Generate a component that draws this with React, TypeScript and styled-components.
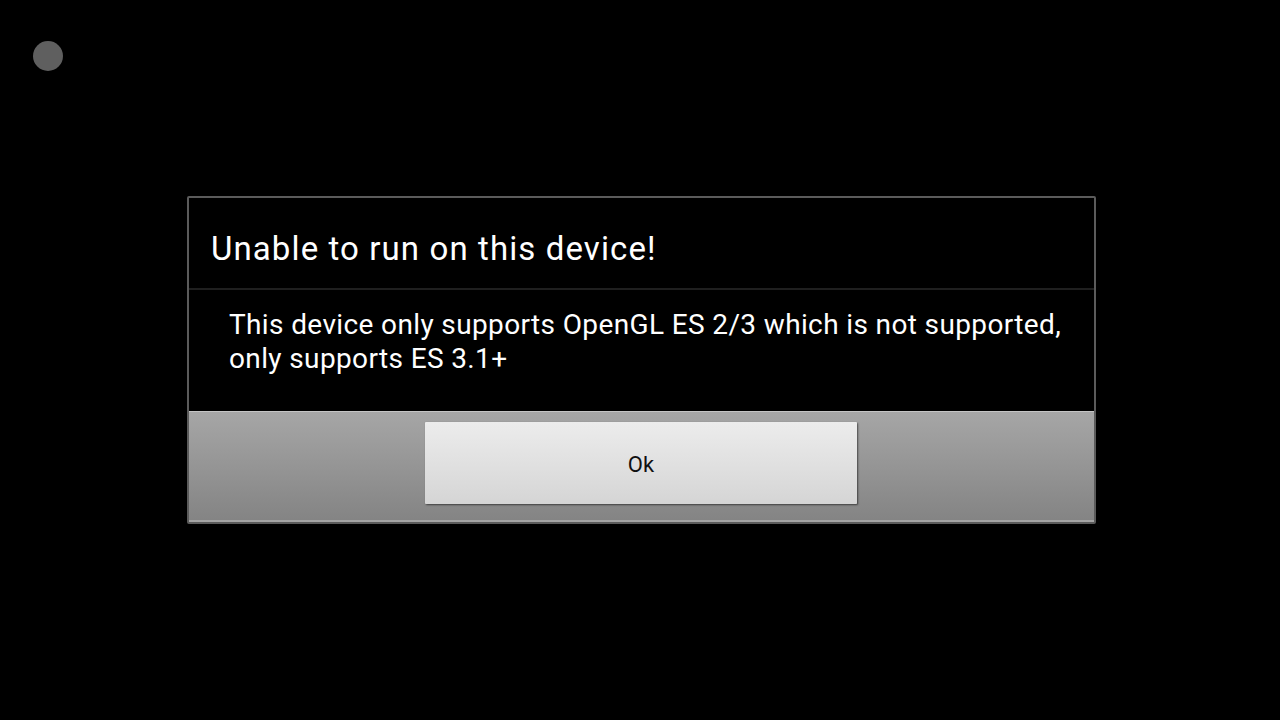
import styled, { createGlobalStyle } from "styled-components";

const Global = createGlobalStyle`
 html, body { margin: 0; padding: 0; background: #000; }
 body { font-family: Roboto, "Noto Sans", sans-serif; }
`;

const Screen = styled.div`
 width: 1280px;
 height: 720px;
 background: #000;
 position: relative;
 display: flex;
 align-items: flex-start;
 justify-content: center;
 padding-top: 196px;
 padding-left: 3px;
 box-sizing: border-box;
`;

const Dot = styled.div`
 position: absolute;
 left: 33px;
 top: 41px;
 width: 30px;
 height: 30px;
 border-radius: 50%;
 background: #5f5f5f;
`;

const Dialog = styled.div`
 width: 905px;
 border: 2px solid #5b5b5b;
 border-radius: 2px;
 background: #000;
 display: flex;
 flex-direction: column;
`;

const Title = styled.div`
 height: 92px;
 padding-left: 22px;
 padding-top: 10px;
 display: flex;
 align-items: center;
 color: #fff;
 font-size: 33px;
 letter-spacing: 1.1px;
 border-bottom: 2px solid #1f1f1f;
 box-sizing: border-box;
`;

const Message = styled.div`
 padding: 18px 20px 0 40px;
 height: 121px;
 box-sizing: border-box;
 color: #fff;
 font-size: 28px;
 letter-spacing: 0.37px;
 line-height: 34px;
 white-space: nowrap;
`;

const ButtonBar = styled.div`
 height: 111px;
 box-sizing: border-box;
 border-top: 1px solid #c4c4c4;
 border-bottom: 2px solid #a4a4a4;
 background: linear-gradient(to bottom, #a6a6a6, #848484);
 display: flex;
 justify-content: center;
 padding-top: 10px;
`;

const Button = styled.button`
 width: 432px;
 height: 82px;
 margin-left: -1px;
 border: none;
 border-radius: 1px;
 background: linear-gradient(to bottom, #ececec, #d5d5d5);
 box-shadow: 1px 1px 2px rgba(0, 0, 0, 0.55);
 font-family: Roboto, "Noto Sans", sans-serif;
 font-size: 22px;
 color: #111;
 padding: 2px 0 0;
`;

export default function App() {
 return (
  <>
   <Global />
   <Screen>
    <Dot />
    <Dialog>
     <Title>Unable to run on this device!</Title>
     <Message>
      This device only supports OpenGL ES 2/3 which is not supported,
      <br />
      only supports ES 3.1+
     </Message>
     <ButtonBar>
      <Button>Ok</Button>
     </ButtonBar>
    </Dialog>
   </Screen>
  </>
 );
}
